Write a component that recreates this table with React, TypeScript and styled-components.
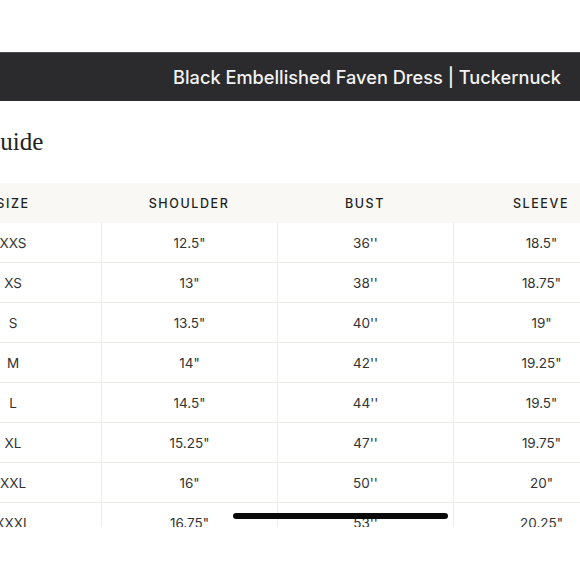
import React from "react";
import styled, { createGlobalStyle } from "styled-components";

const Global = createGlobalStyle`
  html, body { margin: 0; padding: 0; background: #ffffff; overflow: hidden; }
  body { width: 580px; height: 580px; }
  #root { width: 580px; height: 580px; position: relative; overflow: hidden; }
`;

const Page = styled.div`
  display: flex;
  flex-direction: column;
  width: 580px;
  height: 580px;
  padding-top: 52px;
  box-sizing: border-box;
`;

const TitleBar = styled.div`
  height: 49px;
  background: #2b2b2d;
  display: flex;
  align-items: center;
  justify-content: flex-end;
  padding-right: 19px;
  border-top: 1px solid #4a4a4c;
  box-sizing: border-box;
`;

const Title = styled.span`
  font-family: Inter, "Noto Sans", sans-serif;
  font-size: 18.2px;
  font-weight: 500;
  color: #f2f2f2;
  letter-spacing: 0px;
`;

const Content = styled.div`
  margin-left: -75px;
  display: flex;
  flex-direction: column;
`;

const Heading = styled.h1`
  margin: 0;
  padding: 27px 0 0 8px;
  height: 55px;
  box-sizing: content-box;
  font-family: "Liberation Serif", serif;
  font-weight: 400;
  font-size: 25px;
  line-height: 28px;
  color: #222;
`;

const TableViewport = styled.div`
  height: 344px;
  overflow: hidden;
`;

const Grid = styled.div`
  display: grid;
  grid-template-columns: repeat(4, 176px);
`;

const HeadCell = styled.div`
  height: 40px;
  box-sizing: border-box;
  background: #f9f8f4;
  display: flex;
  align-items: center;
  justify-content: center;
  font-family: Inter, "Noto Sans", sans-serif;
  font-size: 12.5px;
  font-weight: 500;
  letter-spacing: 1.6px;
  color: #1f1f1f;
`;

const Cell = styled.div<{ $first: boolean }>`
  height: 40px;
  box-sizing: border-box;
  display: flex;
  align-items: center;
  justify-content: center;
  border-bottom: 1px solid #efece7;
  border-left: ${(p) => (p.$first ? "none" : "1px solid #efece7")};
  font-family: Inter, "Noto Sans", sans-serif;
  font-size: 13.5px;
  color: #333;
`;

const HomeIndicator = styled.div`
  position: absolute;
  left: 233px;
  top: 513px;
  width: 215px;
  height: 6px;
  border-radius: 3px;
  background: #0a0a0a;
`;

const headers = ["SIZE", "SHOULDER", "BUST", "SLEEVE"];
const rows: string[][] = [
  ["XXS", '12.5"', "36''", '18.5"'],
  ["XS", '13"', "38''", '18.75"'],
  ["S", '13.5"', "40''", '19"'],
  ["M", '14"', "42''", '19.25"'],
  ["L", '14.5"', "44''", '19.5"'],
  ["XL", '15.25"', "47''", '19.75"'],
  ["XXL", '16"', "50''", '20"'],
  ["XXXL", '16.75"', "53''", '20.25"'],
];

export default function App() {
  return (
    <>
      <Global />
      <Page>
        <TitleBar>
          <Title>Black Embellished Faven Dress | Tuckernuck</Title>
        </TitleBar>
        <Content>
          <Heading>Size Guide</Heading>
          <TableViewport>
            <Grid>
              {headers.map((h) => (
                <HeadCell key={h}>{h}</HeadCell>
              ))}
              {rows.map((r) =>
                r.map((v, i) => (
                  <Cell key={r[0] + i} $first={i === 0}>
                    {v}
                  </Cell>
                ))
              )}
            </Grid>
          </TableViewport>
        </Content>
      </Page>
      <HomeIndicator />
    </>
  );
}
